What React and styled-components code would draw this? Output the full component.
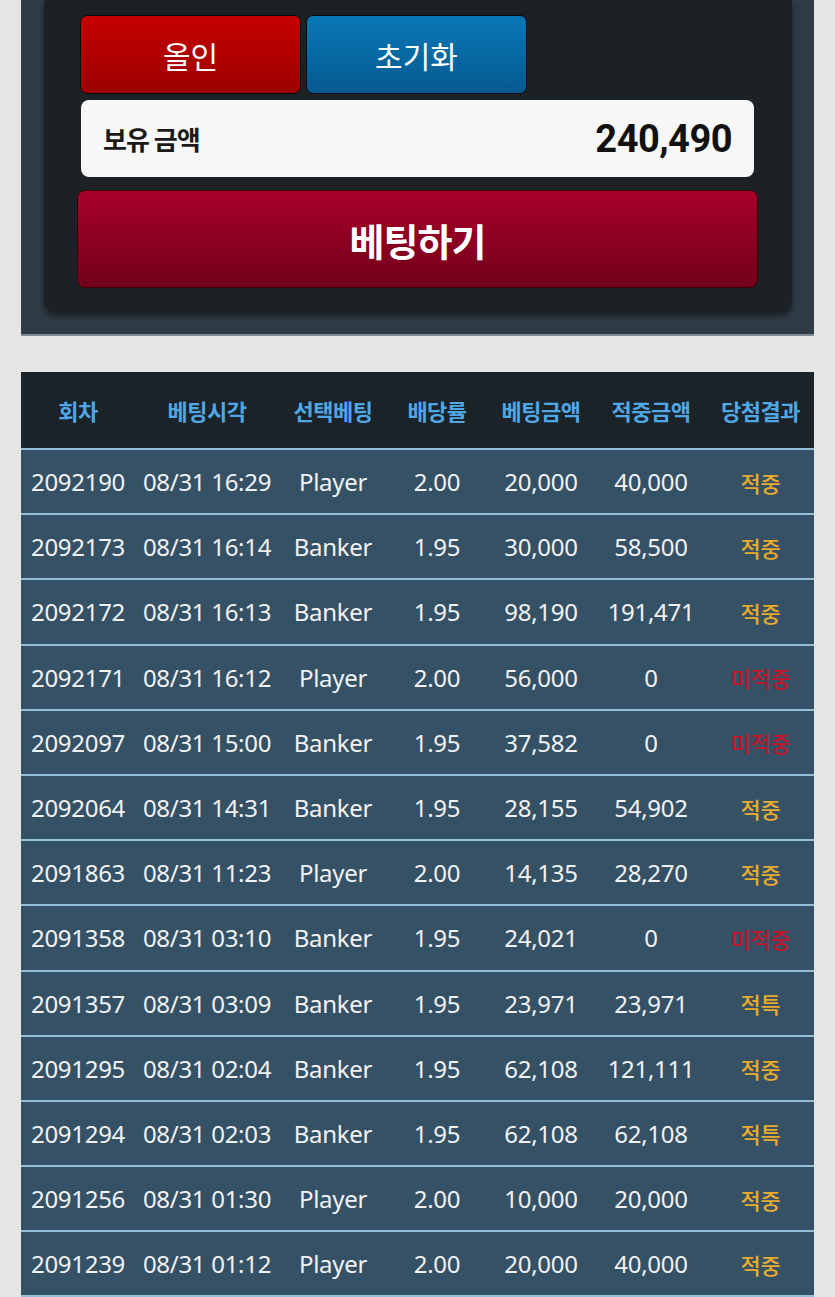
import React from "react";
import styled, { createGlobalStyle } from "styled-components";

const GlobalStyle = createGlobalStyle`
  html, body {
    margin: 0;
    padding: 0;
    background: #e5e5e5;
    font-family: "Noto Sans", "Noto Sans CJK KR", sans-serif;
  }
`;

const Page = styled.div`
  width: 835px;
  height: 1297px;
  overflow: hidden;
  background: #e5e5e5;
`;

const BetPanel = styled.section`
  margin: 0 21px;
  padding: 0 22px 22px 23px;
  background: #2f3b46;
  border-bottom: 2px solid #7c8c98;
`;

const PanelCard = styled.div`
  background: #1c2126;
  border-radius: 0 0 10px 10px;
  box-shadow: 0 4px 6px rgba(0, 0, 0, 0.45);
  padding: 15px 34px 24px 33px;
  display: flex;
  flex-direction: column;
`;

const ButtonRow = styled.div`
  display: flex;
  gap: 5px;
  padding-left: 3px;
`;

const SmallButton = styled.button`
  width: 221px;
  height: 79px;
  border: 1.5px solid #0c0c0c;
  border-radius: 7px;
  color: #fff;
  font-family: "Noto Sans CJK KR", sans-serif;
  font-size: 30px;
  font-weight: 400;
  background: ${(p) =>
    p.$tone === "red"
      ? "linear-gradient(#c60000, #9c0000)"
      : "linear-gradient(#0a78b6, #055a90)"};
`;

const BalanceBox = styled.div`
  margin: 6px 4px 0 4px;
  height: 77px;
  background: #f7f7f7;
  border-radius: 8px;
  display: flex;
  align-items: center;
  justify-content: space-between;
  padding: 0 22px 0 22px;
`;

const BalanceLabel = styled.span`
  font-family: "Noto Sans CJK KR", sans-serif;
  font-size: 26px;
  font-weight: 700;
  color: #1a1a1a;
  letter-spacing: -1px;
`;

const BalanceValue = styled.span`
  font-family: "Roboto", "Noto Sans", sans-serif;
  font-size: 38px;
  font-weight: 700;
  color: #111;
  letter-spacing: -0.5px;
`;

const BetButton = styled.button`
  margin-top: 13px;
  height: 98px;
  border: 1px solid #3a0008;
  border-radius: 8px;
  background: linear-gradient(#a8002a, #72001a);
  color: #fff;
  font-family: "Noto Sans CJK KR", sans-serif;
  font-size: 38px;
  font-weight: 700;
  letter-spacing: -1px;
`;

const Table = styled.div`
  margin: 36px 21px 0 21px;
  background: #355166;
`;

const cols = "114px 144px 108px 100px 108px 112px 107px";

const HeadRow = styled.div`
  display: grid;
  grid-template-columns: ${cols};
  height: 76px;
  align-items: center;
  background: #1b2329;
  border-bottom: 2px solid #94bfd8;
`;

const HeadCell = styled.div`
  text-align: center;
  color: #4fa7e6;
  font-family: "Noto Sans CJK KR", sans-serif;
  font-size: 22px;
  font-weight: 700;
  letter-spacing: -0.5px;
  white-space: nowrap;
`;

const Row = styled.div`
  display: grid;
  grid-template-columns: ${cols};
  height: 63.2px;
  align-items: center;
  background: #355166;
  border-bottom: 2px solid #94bfd8;
`;

const Cell = styled.div`
  text-align: center;
  color: #f2f2f2;
  font-family: "Noto Sans", sans-serif;
  font-size: 24px;
  letter-spacing: -0.3px;
  white-space: nowrap;
`;

const ResultCell = styled(Cell)`
  font-family: "Noto Sans CJK KR", sans-serif;
  font-size: 22px;
  font-weight: 500;
  color: ${(p) => (p.$miss ? "#c3142a" : "#e9aa2c")};
`;

const headers = ["회차", "베팅시각", "선택베팅", "배당률", "베팅금액", "적중금액", "당첨결과"];

const rows = [
  ["2092190", "08/31 16:29", "Player", "2.00", "20,000", "40,000", "적중"],
  ["2092173", "08/31 16:14", "Banker", "1.95", "30,000", "58,500", "적중"],
  ["2092172", "08/31 16:13", "Banker", "1.95", "98,190", "191,471", "적중"],
  ["2092171", "08/31 16:12", "Player", "2.00", "56,000", "0", "미적중"],
  ["2092097", "08/31 15:00", "Banker", "1.95", "37,582", "0", "미적중"],
  ["2092064", "08/31 14:31", "Banker", "1.95", "28,155", "54,902", "적중"],
  ["2091863", "08/31 11:23", "Player", "2.00", "14,135", "28,270", "적중"],
  ["2091358", "08/31 03:10", "Banker", "1.95", "24,021", "0", "미적중"],
  ["2091357", "08/31 03:09", "Banker", "1.95", "23,971", "23,971", "적특"],
  ["2091295", "08/31 02:04", "Banker", "1.95", "62,108", "121,111", "적중"],
  ["2091294", "08/31 02:03", "Banker", "1.95", "62,108", "62,108", "적특"],
  ["2091256", "08/31 01:30", "Player", "2.00", "10,000", "20,000", "적중"],
  ["2091239", "08/31 01:12", "Player", "2.00", "20,000", "40,000", "적중"],
];

export default function App() {
  return (
    <Page>
      <GlobalStyle />
      <BetPanel>
        <PanelCard>
          <ButtonRow>
            <SmallButton $tone="red">올인</SmallButton>
            <SmallButton $tone="blue">초기화</SmallButton>
          </ButtonRow>
          <BalanceBox>
            <BalanceLabel>보유 금액</BalanceLabel>
            <BalanceValue>240,490</BalanceValue>
          </BalanceBox>
          <BetButton>베팅하기</BetButton>
        </PanelCard>
      </BetPanel>

      <Table>
        <HeadRow>
          {headers.map((h) => (
            <HeadCell key={h}>{h}</HeadCell>
          ))}
        </HeadRow>
        {rows.map((r) => (
          <Row key={r[0]}>
            {r.slice(0, 6).map((v, i) => (
              <Cell key={i}>{v}</Cell>
            ))}
            <ResultCell $miss={r[6] === "미적중"}>{r[6]}</ResultCell>
          </Row>
        ))}
      </Table>
    </Page>
  );
}
